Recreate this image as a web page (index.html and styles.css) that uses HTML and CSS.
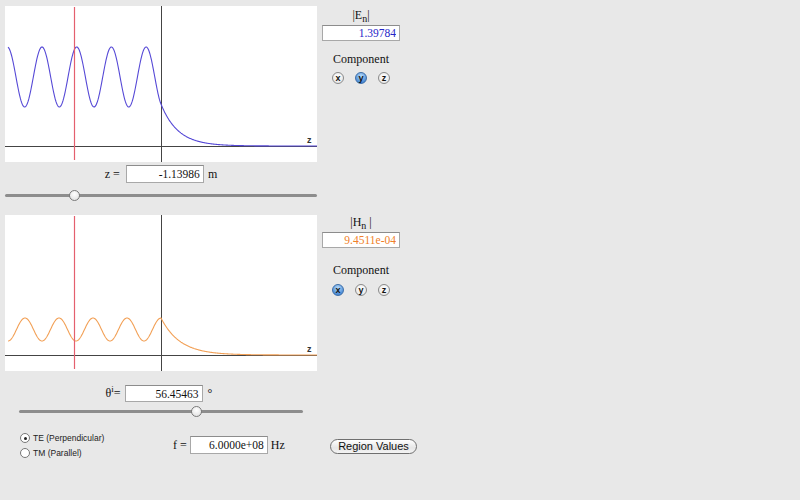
FILE: index.html
```html
<!DOCTYPE html>
<html lang="en">
<head>
  <meta charset="UTF-8">
  <title>Oblique Incidence</title>
  <link rel="stylesheet" href="styles.css">
</head>
<body>

<div class="app">

  <section class="field">
    <div class="plot-col">
      <svg class="plot" width="312" height="156" viewBox="0 0 312 156">
        <line class="axis" x1="0" y1="140.5" x2="312" y2="140.5"/>
        <line class="axis" x1="156.5" y1="0" x2="156.5" y2="156"/>
        <path id="curveE" class="curve-e" d=""/>
        <line class="probe" x1="69.5" y1="1" x2="69.5" y2="154"/>
        <text class="axis-label" x="302" y="137">z</text>
      </svg>
      <div class="readout">
        <span class="lbl">z =</span>
        <input class="num" type="text" value="-1.13986">
        <span class="unit">m</span>
      </div>
      <input class="slider" type="range" min="0" max="1000" value="214">
    </div>
    <aside class="side">
      <div class="mag">|E<sub>n</sub>|</div>
      <input class="num mag-e" type="text" value="1.39784" readonly>
      <div class="comp-title">Component</div>
      <div class="comp">
        <span class="pick">x</span>
        <span class="pick on">y</span>
        <span class="pick">z</span>
      </div>
    </aside>
  </section>

  <section class="field field-h">
    <div class="plot-col">
      <svg class="plot" width="312" height="156" viewBox="0 0 312 156">
        <line class="axis" x1="0" y1="140.5" x2="312" y2="140.5"/>
        <line class="axis" x1="156.5" y1="0" x2="156.5" y2="156"/>
        <path id="curveH" class="curve-h" d=""/>
        <line class="probe" x1="69.5" y1="1" x2="69.5" y2="154"/>
        <text class="axis-label" x="302" y="137">z</text>
      </svg>
      <div class="readout readout-angle">
        <span class="lbl">&theta;<sup>i</sup>=</span>
        <input class="num" type="text" value="56.45463">
        <span class="unit">&deg;</span>
      </div>
      <input class="slider slider-angle" type="range" min="0" max="1000" value="630">
    </div>
    <aside class="side">
      <div class="mag">|H<sub>n</sub> |</div>
      <input class="num mag-h" type="text" value="9.4511e-04" readonly>
      <div class="comp-title">Component</div>
      <div class="comp">
        <span class="pick on">x</span>
        <span class="pick">y</span>
        <span class="pick">z</span>
      </div>
    </aside>
  </section>

  <div class="controls">
    <div class="pol">
      <label class="opt"><span class="dot checked"></span>TE (Perpendicular)</label>
      <label class="opt"><span class="dot"></span>TM (Parallel)</label>
    </div>
    <div class="readout freq">
      <span class="lbl">f =</span>
      <input class="num" type="text" value="6.0000e+08">
      <span class="unit">Hz</span>
    </div>
    <div class="btn-cell">
      <button class="region-btn">Region Values</button>
    </div>
  </div>

</div>

<script>
  // standing wave left of the interface, evanescent decay on the right
  function waveY(opts, x) {
    return opts.mid - opts.amp * Math.cos(2 * Math.PI * (x - opts.peak) / opts.period);
  }

  function buildPath(opts) {
    const edge = 140 - waveY(opts, 156);
    let d = "";
    for (let x = 3; x <= 312; x += 0.5) {
      let y;
      if (x <= 156) {
        y = waveY(opts, x);
      } else {
        y = 140 - edge * Math.exp(-(x - 156) / opts.decay);
      }
      d += (d ? " L" : "M") + x.toFixed(1) + " " + y.toFixed(2);
    }
    return d;
  }

  document.getElementById("curveE").setAttribute("d", buildPath({
    mid: 71, amp: 30, peak: 2.3, period: 34.7, decay: 17
  }));

  document.getElementById("curveH").setAttribute("d", buildPath({
    mid: 114.5, amp: 11.5, peak: 20, period: 34, decay: 19
  }));
</script>

</body>
</html>
```

FILE: styles.css
```css
body {
  margin: 0;
  background-color: #e8e8e8;
  font-family: 'Liberation Serif', serif;
  color: #111;
}

.app {
  padding: 6px 0 0 5px;
  width: 420px;
}

.field {
  display: flex;
  align-items: flex-start;
}

.field-h {
  margin-top: 14px;
}

.plot-col {
  width: 312px;
}

.plot {
  display: block;
  background: #ffffff;
}

.axis {
  stroke: #444;
  stroke-width: 1;
}

.probe {
  stroke: #e4606e;
  stroke-width: 1.2;
}

.curve-e {
  fill: none;
  stroke: #5548d6;
  stroke-width: 1.1;
}

.curve-h {
  fill: none;
  stroke: #f2a056;
  stroke-width: 1.1;
}

.axis-label {
  font-family: 'Liberation Sans', sans-serif;
  font-size: 9px;
  font-weight: bold;
  fill: #333;
}

/* label + value box + unit */
.readout {
  display: flex;
  justify-content: center;
  align-items: center;
  gap: 4px;
  height: 18px;
  margin-top: 3px;
  font-size: 12px;
}

.readout .lbl {
  margin-right: 2px;
}

.readout sup {
  font-size: 9px;
  vertical-align: 5px;
  line-height: 0;
}

.readout-angle {
  margin-top: 14px;
  height: 17px;
  padding-right: 4px;
}

.readout-angle .lbl {
  margin-right: 0;
}

.readout-angle .unit {
  margin-left: 1px;
}

.num {
  box-sizing: border-box;
  width: 78px;
  height: 18px;
  margin: 0;
  padding: 0 3px 0 0;
  border: 1px solid #a8a8a8;
  border-top-color: #8c8c8c;
  background: #fff;
  text-align: right;
  font-family: 'Liberation Serif', serif;
  font-size: 11.5px;
  color: #111;
  outline: none;
}

.readout-angle .num {
  height: 17px;
}

/* sliders */
.slider {
  -webkit-appearance: none;
  appearance: none;
  display: block;
  width: 100%;
  height: 12px;
  margin: 6px 0 0;
  background: transparent;
}

.slider::-webkit-slider-runnable-track {
  height: 3px;
  background: #8d8d8d;
  border-radius: 2px;
}

.slider::-webkit-slider-thumb {
  -webkit-appearance: none;
  width: 11px;
  height: 11px;
  margin-top: -4px;
  border-radius: 50%;
  border: 1px solid #7a7a7a;
  background: radial-gradient(circle at 50% 35%, #ffffff, #dcdcdc);
  box-sizing: border-box;
}

.slider-angle {
  width: 284px;
  margin: 3px 14px 0;
}

/* side panel */
.side {
  width: 78px;
  margin-left: 5px;
  text-align: center;
}

.mag {
  height: 16px;
  line-height: 16px;
  margin-top: 1px;
  font-size: 12px;
}

.mag sub {
  font-size: 10px;
  vertical-align: -3px;
  line-height: 0;
}

.side .num {
  display: block;
  height: 16px;
  margin-top: 2px;
}

.mag-e {
  color: #2626c8;
}

.mag-h {
  color: #f07f2a;
}

.comp-title {
  margin-top: 10px;
  height: 16px;
  line-height: 16px;
  font-size: 12px;
}

.comp {
  display: flex;
  justify-content: center;
  gap: 11px;
  margin-top: 5px;
}

.field-h .mag {
  margin-top: -1px;
}

.field-h .comp-title {
  margin-top: 14px;
}

.field-h .comp {
  margin-top: 6px;
}

.pick {
  box-sizing: border-box;
  width: 12px;
  height: 12px;
  border-radius: 50%;
  border: 1px solid #8a8a8a;
  background: radial-gradient(circle at 50% 35%, #ffffff, #e0e0e0);
  font-family: 'Liberation Sans', sans-serif;
  font-size: 9px;
  font-weight: bold;
  line-height: 10px;
  text-align: center;
  color: #111;
}

.pick.on {
  border-color: #3d6ea8;
  background: radial-gradient(circle at 50% 30%, #b9dcfb, #4f8fd8 70%, #3a74c0);
}

/* bottom row */
.controls {
  display: grid;
  grid-template-columns: 153px 157px auto;
  align-items: center;
  margin-top: 13px;
  padding-left: 15px;
}

.pol {
  display: flex;
  flex-direction: column;
}

.opt {
  display: flex;
  align-items: center;
  gap: 3px;
  height: 15px;
  font-family: 'Liberation Sans', sans-serif;
  font-size: 8.5px;
  color: #222;
}

.dot {
  box-sizing: border-box;
  width: 10px;
  height: 10px;
  border-radius: 50%;
  border: 1px solid #777;
  background: #fff;
  position: relative;
}

.dot.checked::after {
  content: "";
  position: absolute;
  left: 3px;
  top: 3px;
  width: 3px;
  height: 3px;
  border-radius: 50%;
  background: #222;
}

.freq {
  justify-content: flex-start;
  margin-top: 0;
}

.freq .lbl {
  margin-right: -1px;
}

.freq .unit {
  margin-left: -1px;
}

.region-btn {
  box-sizing: border-box;
  width: 87px;
  height: 15px;
  padding: 0;
  border: 1px solid #6f6f6f;
  border-radius: 8px;
  background: linear-gradient(#ffffff, #e6e6e6 60%, #f4f4f4);
  font-family: 'Liberation Sans', sans-serif;
  font-size: 11px;
  color: #111;
  line-height: 13px;
}
```
